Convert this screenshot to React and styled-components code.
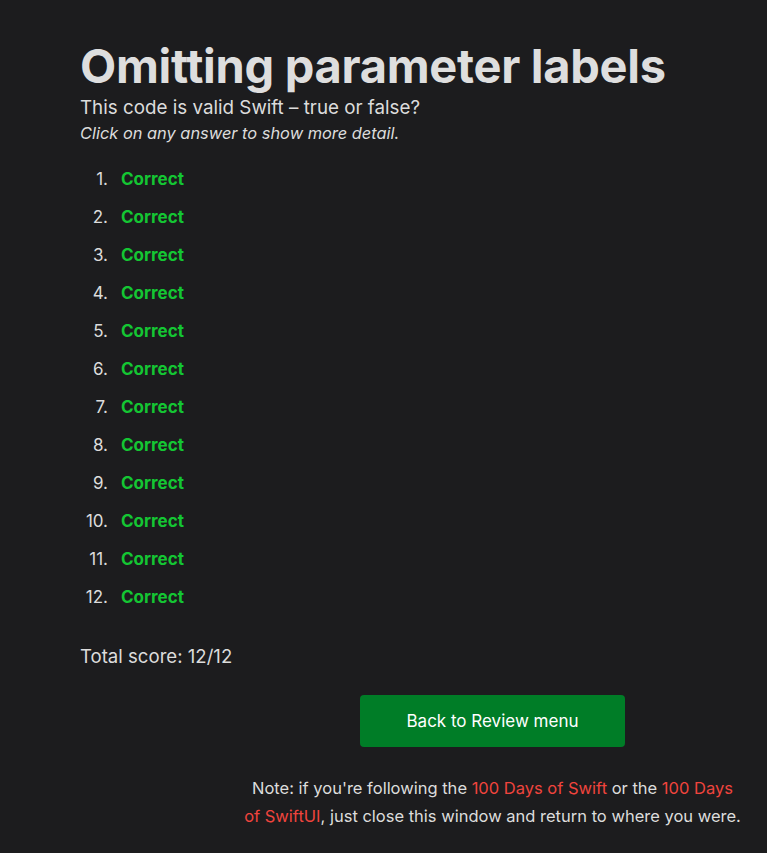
import styled, { createGlobalStyle } from "styled-components";

const GlobalStyle = createGlobalStyle`
  html, body {
    margin: 0;
    background: #1c1c1e;
    color: #dcdcdc;
    font-family: Inter, "Noto Sans", sans-serif;
  }
`;

const Page = styled.main`
  width: 660px;
  padding: 38px 0 20px;
  margin-left: 80px;
`;

const Title = styled.h1`
  font-size: 47px;
  font-weight: 700;
  line-height: 56px;
  margin: 0;
  color: #dedede;
  letter-spacing: -0.3px;
`;

const Subtitle = styled.p`
  font-size: 18.8px;
  line-height: 27px;
  margin: 0;
`;

const Hint = styled.p`
  font-size: 16.4px;
  font-style: italic;
  line-height: 25px;
  margin: 0 0 14px;
`;

const Answers = styled.ol`
  margin: 0;
  padding: 0;
  list-style: none;
  font-size: 17px;
`;

const Answer = styled.li`
  display: flex;
  line-height: 38px;
`;

const Num = styled.span`
  width: 28px;
  margin-right: 13px;
  text-align: right;
  color: #dcdcdc;
`;

const Verdict = styled.a`
  font-weight: 700;
  color: ${(p) => (p.$ok ? "#14c633" : "#ff453a")};
  text-decoration: none;
  cursor: pointer;
`;

const Score = styled.p`
  font-size: 18.6px;
  margin: 29px 0 28px;
`;

const Footer = styled.section`
  margin-left: 25%;
  display: flex;
  flex-direction: column;
  align-items: center;
`;

const BackButton = styled.a`
  display: flex;
  align-items: center;
  justify-content: center;
  width: 265px;
  height: 52px;
  border-radius: 4px;
  background: #007d27;
  color: #fff;
  font-size: 17px;
  text-decoration: none;
`;

const Note = styled.p`
  text-align: center;
  font-size: 16.5px;
  line-height: 28px;
  margin: 27px -2px 0;
  a {
    color: #f0443d;
    text-decoration: none;
  }
`;

export default function App() {
  function handleClick(e) {
    e.preventDefault();
  }
  const answers = Array.from({ length: 12 }, () => true);
  return (
    <>
      <GlobalStyle />
      <Page>
        <Title>Omitting parameter labels</Title>
        <Subtitle>This code is valid Swift – true or false?</Subtitle>
        <Hint>Click on any answer to show more detail.</Hint>
        <Answers>
          {answers.map((ok, i) => (
            <Answer key={i}>
              <Num>{i + 1}.</Num>
              <Verdict $ok={ok} href="/#" onClick={handleClick}>
                {ok ? "Correct" : "Wrong"}
              </Verdict>
            </Answer>
          ))}
        </Answers>
        <Score>Total score: 12/12</Score>
        <Footer>
          <BackButton href="/#" onClick={handleClick}>Back to Review menu</BackButton>
          <Note>
            Note: if you're following the <a href="/#" onClick={handleClick}>100 Days of Swift</a> or the{" "}
            <a href="/#" onClick={handleClick}>100 Days of SwiftUI</a>, just close this window and return to where you were.
          </Note>
        </Footer>
      </Page>
    </>
  );
}
